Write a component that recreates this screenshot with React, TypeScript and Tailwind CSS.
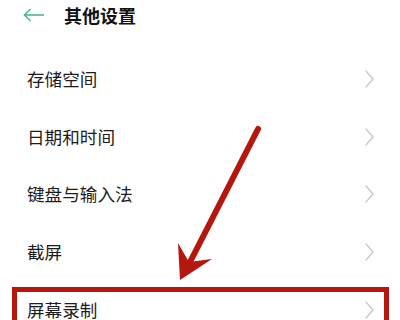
import React from "react";

const items = ["存储空间", "日期和时间", "键盘与输入法", "截屏", "屏幕录制"];

function Chevron() {
  return (
    <svg width="9" height="18" viewBox="0 0 9 18" className="mr-[26px]">
      <polyline points="1,1 8,9 1,17" fill="none" stroke="#c9c9c9" strokeWidth="1.4" strokeLinejoin="round" strokeLinecap="round" />
    </svg>
  );
}

export default function App() {
  return (
    <div
      className="relative w-[400px] h-[320px] overflow-hidden bg-white"
      style={{ fontFamily: '"Noto Sans CJK SC", "Noto Sans", sans-serif' }}
    >
      <div className="h-[30px] flex items-center">
        <svg width="22" height="14" viewBox="0 0 22 14" className="ml-[23px]">
          <line x1="1.5" y1="7" x2="21" y2="7" stroke="#4fb88e" strokeWidth="1.6" />
          <polyline points="7.5,1 1.5,7 7.5,13" fill="none" stroke="#4fb88e" strokeWidth="1.6" />
        </svg>
        <span className="ml-[19px] text-[18px] leading-none font-bold text-[#111]">其他设置</span>
      </div>
      <div className="mt-[20px] flex flex-col">
        {items.map((t) => (
          <div key={t} className="h-[57.7px] flex items-center justify-between">
            <span className="ml-[27px] text-[17.6px] leading-none text-[#1c1c1c]">{t}</span>
            <Chevron />
          </div>
        ))}
      </div>
      <div className="absolute left-[12px] top-[287px] w-[377px] h-[60px] border-[5px] border-[#b5170e]" />
      <svg className="absolute left-0 top-0" width="400" height="320" viewBox="0 0 400 320">
        <line x1="258" y1="129" x2="188" y2="266" stroke="#b5170e" strokeWidth="6" strokeLinecap="round" />
        <polygon points="180,280 178,243 189,262 212,259" fill="#b5170e" />
      </svg>
    </div>
  );
}
